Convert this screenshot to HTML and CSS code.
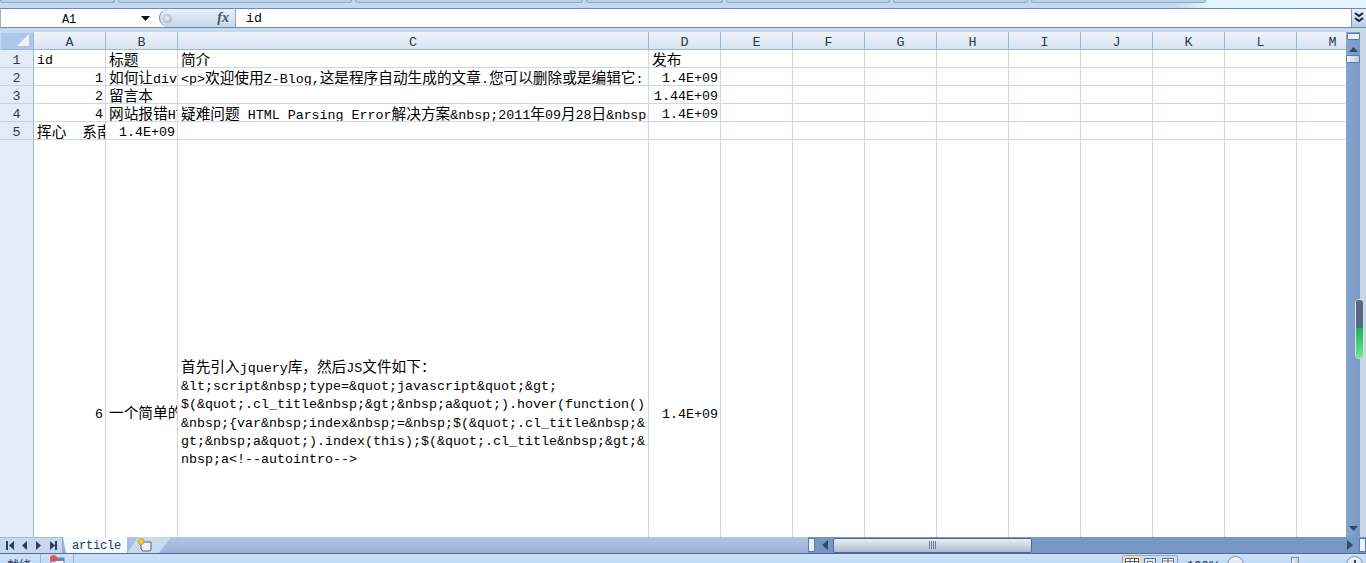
FILE: index.html
```html
<!DOCTYPE html>
<html lang="zh">
<head>
<meta charset="utf-8">
<title>article</title>
<link rel="stylesheet" href="styles.css">
</head>
<body>
<div class="ribbon">
  <div class="pill w1"></div><div class="pill w2"></div><div class="pill w3"></div><div class="pill w4"></div><div class="pill w5"></div><div class="pill w6"></div><div class="pill w7"></div>
</div>
<div class="formula">
  <div class="namebox"><span class="nameval">A1</span><svg class="drop" width="9" height="5" viewBox="0 0 9 5"><path d="M0 0h9L4.500 5z" fill="#111"/></svg></div>
  <div class="fxbtn"><span class="knob"></span><span class="fx">fx</span></div>
  <div class="input">id</div>
  <div class="expand"><svg width="10" height="12" viewBox="0 0 10 12"><path d="M1 1l4 3 4-3M1 6l4 3 4-3" fill="none" stroke="#14233a" stroke-width="2"/></svg></div>
</div>
<div class="gap"></div>
<div class="main">
  <div class="sheet">
    <div class="grid">
      <div class="corner"><svg width="12" height="12" viewBox="0 0 12 12"><path d="M12 0v12H0z" fill="#eef3fa"/></svg></div>
      <div class="ch">A</div><div class="ch">B</div><div class="ch">C</div><div class="ch">D</div><div class="ch">E</div><div class="ch">F</div><div class="ch">G</div><div class="ch">H</div><div class="ch">I</div><div class="ch">J</div><div class="ch">K</div><div class="ch">L</div><div class="ch">M</div>

      <div class="rh">1</div>
      <div class="c">id</div><div class="c"><span class="z">标题</span></div><div class="c"><span class="z">简介</span></div><div class="c"><span class="z">发布</span></div><div class="c"></div><div class="c"></div><div class="c"></div><div class="c"></div><div class="c"></div><div class="c"></div><div class="c"></div><div class="c"></div><div class="c"></div>

      <div class="rh">2</div>
      <div class="c r">1</div><div class="c"><span class="z">如何让</span>div</div><div class="c">&lt;p&gt;<span class="z">欢迎使用</span>Z-Blog,<span class="z">这是程序自动生成的文章</span>.<span class="z">您可以删除或是编辑它</span>:</div><div class="c r">1.4E+09</div><div class="c"></div><div class="c"></div><div class="c"></div><div class="c"></div><div class="c"></div><div class="c"></div><div class="c"></div><div class="c"></div><div class="c"></div>

      <div class="rh">3</div>
      <div class="c r">2</div><div class="c"><span class="z">留言本</span></div><div class="c"></div><div class="c r">1.44E+09</div><div class="c"></div><div class="c"></div><div class="c"></div><div class="c"></div><div class="c"></div><div class="c"></div><div class="c"></div><div class="c"></div><div class="c"></div>

      <div class="rh">4</div>
      <div class="c r">4</div><div class="c"><span class="z">网站报错</span>HTML</div><div class="c"><span class="z">疑难问题</span> HTML Parsing Error<span class="z">解决方案</span>&amp;nbsp;2011<span class="z">年</span>09<span class="z">月</span>28<span class="z">日</span>&amp;nbsp;</div><div class="c r">1.4E+09</div><div class="c"></div><div class="c"></div><div class="c"></div><div class="c"></div><div class="c"></div><div class="c"></div><div class="c"></div><div class="c"></div><div class="c"></div>

      <div class="rh">5</div>
      <div class="c"><span class="z">挥心</span>  <span class="z">系南</span></div><div class="c r">1.4E+09</div><div class="c"></div><div class="c"></div><div class="c"></div><div class="c"></div><div class="c"></div><div class="c"></div><div class="c"></div><div class="c"></div><div class="c"></div><div class="c"></div><div class="c"></div>

      <div class="rh"></div>
      <div class="c r tall">6</div><div class="c tall"><span class="z">一个简单的</span></div>
      <div class="c wrap"><span class="z">首先引入</span>jquery<span class="z">库，然后</span>JS<span class="z">文件如下：</span><br>&amp;lt;script&amp;nbsp;type=&amp;quot;javascript&amp;quot;&amp;gt;<br>$(&amp;quot;.cl_title&amp;nbsp;&amp;gt;&amp;nbsp;a&amp;quot;).hover(function()<br>&amp;nbsp;{var&amp;nbsp;index&amp;nbsp;=&amp;nbsp;$(&amp;quot;.cl_title&amp;nbsp;&amp;<br>gt;&amp;nbsp;a&amp;quot;).index(this);$(&amp;quot;.cl_title&amp;nbsp;&amp;gt;&amp;<br>nbsp;a&lt;!--autointro--&gt;</div>
      <div class="c r tall">1.4E+09</div><div class="c"></div><div class="c"></div><div class="c"></div><div class="c"></div><div class="c"></div><div class="c"></div><div class="c"></div><div class="c"></div><div class="c"></div>
    </div>
  </div>
  <div class="vbar">
    <div class="vtrack">
      <div class="split-v"></div>
      <svg class="varrow" width="9" height="5" viewBox="0 0 9 5"><path d="M0 5h9L4.500 0z" fill="#2f4a70"/></svg>
      <div class="vthumb"></div>
      <svg class="varrow down" width="9" height="5" viewBox="0 0 9 5"><path d="M0 0h9L4.500 5z" fill="#2f4a70"/></svg>
    </div>
    <div class="vedge"></div>
  </div>
  <div class="meter"><div class="meter-top"></div><div class="meter-low"></div></div>
</div>
<div class="tabbar">
  <div class="tabnav">
    <svg width="62" height="16" viewBox="0 0 62 16"><g fill="#243f66"><path d="M6 3h2v9H6zM14 3v9L9 7.500z"/><path d="M27 3v9l-5-4.500z"/><path d="M36 3v9l5-4.500z"/><path d="M50 3v9l5-4.500zM55 3h2v9h-2z"/></g></svg>
  </div>
  <div class="tab">article</div>
  <div class="newtab"><svg width="16" height="14" viewBox="0 0 16 14"><path d="M4 4h10v8l-2 1H6l-2-2z" fill="#eef3fa" stroke="#4d6486"/><circle cx="4" cy="3.500" r="3" fill="#f2c84b" stroke="#b58a20" stroke-width=".6"/></svg></div>
  <div class="tabfill"></div>
  <div class="hbar">
    <div class="split-h"></div>
    <svg class="harrow" width="6" height="10" viewBox="0 0 6 10"><path d="M6 0v10L0 5z" fill="#2f4a70"/></svg>
    <div class="hthumb"><svg width="8" height="8" viewBox="0 0 8 8"><path d="M.5 0v8M2.500 0v8M4.500 0v8M6.500 0v8" stroke="#6d7f9b"/></svg></div>
    <div class="hspace"></div>
    <svg class="harrow" width="6" height="10" viewBox="0 0 6 10"><path d="M0 0v10l6-5z" fill="#2f4a70"/></svg>
    <div class="split-h"></div>
  </div>
</div>
<div class="status">
  <div class="st-ready">就绪</div>
  <div class="st-macro"><svg width="16" height="14" viewBox="0 0 16 14"><rect x="2" y="3" width="13" height="11" fill="#f4f6fb" stroke="#6a7f9f"/><rect x="2" y="3" width="13" height="3" fill="#5f86c4"/><circle cx="4.500" cy="3.500" r="3.500" fill="#e0584a"/></svg></div>
  <div class="st-fill"></div>
  <div class="views">
    <div class="vbtn on"><svg width="14" height="10" viewBox="0 0 14 10"><path d="M.5.500h13v9H.5zM.5 3.500h13M.5 6.500h13M5 .5v9M9.500.5v9" fill="#fff" stroke="#4f5f78"/></svg></div>
    <div class="vbtn"><svg width="12" height="11" viewBox="0 0 12 11"><path d="M.5.500h11v10H.5z" fill="#dfe7f2" stroke="#5c6d86"/><path d="M3.500 3.500h5v4h-5z" fill="#fff" stroke="#5c6d86"/></svg></div>
    <div class="vbtn"><svg width="12" height="11" viewBox="0 0 12 11"><path d="M.5.500h11v10H.5zM6 .5v10M.5 3h11" fill="#fff" stroke="#5c6d86"/></svg></div>
  </div>
  <div class="zoom">100%</div>
  <div class="zbtn"><span class="minus"></span></div>
  <div class="slider"><span class="sthumb"></span></div>
  <div class="zbtn plus"><span class="minus"></span><span class="plusv"></span></div>
</div>
</body>
</html>
```
FILE: styles.css
```css
* { box-sizing: border-box; }
html, body { margin: 0; height: 563px; overflow: hidden; }
body {
  display: flex;
  flex-direction: column;
  background: #fff;
  font-family: "Liberation Mono", "Noto Sans CJK SC", monospace;
  font-size: 13.333px;
  color: #000;
}

/* ribbon remnant */
.ribbon {
  flex: 0 0 8px;
  display: flex;
  gap: 3px;
  align-items: flex-start;
  background: linear-gradient(90deg, #c3d8f1 0, #c3d8f1 86%, #e2f4ff 88.500%, #e4f5ff 100%);
}
.pill {
  height: 3px;
  background: #bad0ea;
  border: 1px solid #8fa9c9;
  border-top: 0;
  border-radius: 0 0 3px 3px;
}
.w1 { width: 115px; } .w2 { width: 234px; } .w3 { width: 228px; } .w4 { width: 137px; }
.w5 { width: 164px; } .w6 { width: 135px; } .w7 { width: 175px; }

/* formula bar */
.formula {
  flex: 0 0 20px;
  display: flex;
  overflow: hidden;
  background: #fff;
  border-top: 1px solid #6e8aa6;
  border-bottom: 1px solid #6e8aa6;
  border-left: 1px solid #9db3cc;
}
.namebox {
  flex: 0 0 158px;
  display: flex;
  align-items: center;
}
.nameval { margin-left: 61px; padding-top: 3px; font-size: 12px; letter-spacing: -.2px; }
.drop { margin-left: 65px; }
.fxbtn {
  flex: 0 0 77px;
  display: flex;
  align-items: center;
  justify-content: space-between;
  padding: 0 6px 0 3px;
  background: linear-gradient(#e9f1fb, #c5d6ec);
  border-radius: 10px 0 0 10px;
  border-left: 1px solid #6e8aa6;
  border-right: 1px solid #8ea5c0;
}
.knob {
  width: 9px;
  height: 9px;
  border-radius: 50%;
  background: radial-gradient(circle at 45% 45%, #f2f4f7, #8b9bb0);
}
.fx {
  font-family: "Liberation Serif", serif;
  font-style: italic;
  font-weight: 700;
  font-size: 14px;
  color: #44556b;
}
.input { flex: 1; padding-left: 10px; line-height: 20px; }
.expand {
  flex: 0 0 15px;
  display: flex;
  align-items: center;
  justify-content: center;
  background: linear-gradient(#e9f0f9, #b9cce6);
  border-left: 1px solid #7f97b5;
}
.gap { flex: 0 0 4px; background: #c9d9ec; }

/* sheet */
.main { flex: 0 0 505px; display: flex; position: relative; overflow: hidden; }
.sheet { flex: 0 0 1346px; overflow: hidden; }
.grid {
  display: grid;
  grid-template-columns: 34px 72px 72px 471px repeat(10, 72px);
  grid-template-rows: repeat(6, 18px) 548px;
}
.corner {
  display: flex;
  align-items: flex-end;
  justify-content: flex-end;
  padding: 0 4px 3px 0;
  background: #aec6e7;
  border: 1px solid #c9d8ec;
  border-right: 1px solid #9eb6ce;
  border-bottom: 1px solid #9eb6ce;
}
.ch {
  text-align: center;
  line-height: 22px;
  overflow: hidden;
  color: #29394f;
  background: linear-gradient(#f0f4fa, #d9e3f0);
  border-right: 1px solid #9eb6ce;
  border-bottom: 1px solid #9eb6ce;
}
.rh {
  text-align: center;
  line-height: 21px;
  overflow: hidden;
  color: #29394f;
  background: #e3ebf6;
  border-right: 1px solid #9eb6ce;
  border-bottom: 1px solid #c5d2e3;
}
.c {
  padding: 0 2px 0 3px;
  line-height: 21px;
  white-space: pre;
  overflow: hidden;
  border-right: 1px solid #d0d7e5;
  border-bottom: 1px solid #d0d7e5;
}
.r { text-align: right; }
.c.tall { line-height: 550px; }
.z {
  font-family: "Noto Sans CJK SC", sans-serif;
  font-size: 14.667px;
  line-height: 17px;
}
.c.wrap { padding-top: 217px; line-height: 18.200px; }

/* vertical bar */
.vbar { flex: 1; display: flex; }
.vtrack {
  flex: 0 0 14px;
  position: relative;
  display: flex;
  flex-direction: column;
  align-items: center;
  background: linear-gradient(90deg, #86a3cd, #7999c6);
}
.vedge { flex: 1; background: #c8d6e8; }
.split-v {
  margin-top: 1px;
  width: 13px;
  height: 7px;
  background: #e9f0f9;
  border: 1px solid #5f7ca6;
  border-radius: 1px;
}
.varrow { margin-top: 7px; }
.vthumb {
  margin-top: 3px;
  width: 14px;
  height: 8px;
  background: linear-gradient(90deg, #f2f5f9, #bcc9da);
  border: 1px solid #5f7ca6;
  border-radius: 1px;
}
.down { position: absolute; bottom: 6px; margin: 0; }
.meter {
  position: absolute;
  left: 1355px;
  top: 267px;
  width: 9px;
  height: 60px;
  border: 1px solid #d6deea;
  border-radius: 4px;
  overflow: hidden;
  display: flex;
  flex-direction: column;
}
.meter-top { flex: 0 0 28px; background: #566a86; }
.meter-low { flex: 1; background: linear-gradient(#17b552, #6fe88f); }

/* tab bar */
.tabbar {
  flex: 0 0 17px;
  display: flex;
  background: linear-gradient(#b3c7e3, #9ab1d5);
  border-bottom: 1px solid #4f6b8f;
  overflow: hidden;
}
.tabnav {
  flex: 0 0 63px;
  background: #c7d7ed;
  border-top: 1px solid #a5bad7;
  border-right: 1px solid #8ea5c6;
  display: flex;
}
.tab {
  flex: 0 0 64px;
  padding-left: 9px;
  font-size: 12px;
  letter-spacing: -.2px;
  line-height: 18px;
  background: #f6f9fd;
  color: #233a5c;
  clip-path: polygon(0 0, 100% 0, 100% 100%, 3px 100%);
}
.newtab {
  flex: 0 0 44px;
  display: flex;
  align-items: center;
  padding-left: 10px;
  background: #c9d9ee;
  clip-path: polygon(11px 0, 100% 0, 32px 100%, 0 100%);
}
.tabfill { flex: 0 0 637px; }
.hbar {
  flex: 1;
  display: flex;
  align-items: center;
  background: #7897c4;
  height: 16px;
}
.split-h {
  flex: 0 0 7px;
  height: 14px;
  background: #edf2f9;
  border: 1px solid #5f7ca6;
}
.harrow { margin: 0 6px 0 7px; }
.hthumb {
  flex: 0 0 199px;
  height: 15px;
  margin-left: -1px;
  display: flex;
  align-items: center;
  justify-content: center;
  background: linear-gradient(#e9eef5, #afbccf);
  border: 1px solid #4f6b8f;
  border-radius: 2px;
}
.hspace { flex: 1; }

/* status bar */
.status {
  flex: 0 0 24px;
  display: flex;
  align-items: flex-start;
  background: linear-gradient(#cbe0fa, #b8d3f4);
  color: #1d3557;
}
.st-ready {
  flex: 0 0 41px;
  padding: 3px 0 0 7px;
  font-family: "Noto Sans CJK SC", sans-serif;
  font-size: 12px;
  line-height: 16px;
  border-right: 1px solid #9ab4d6;
  height: 24px;
}
.st-macro {
  flex: 0 0 33px;
  padding: 1px 0 0 8px;
  border-right: 1px solid #9ab4d6;
  height: 24px;
}
.st-fill { flex: 0 0 1048px; }
.views {
  flex: 0 0 56px;
  display: flex;
  margin-top: 1px;
  border: 1px solid #8ca5c8;
  border-radius: 2px;
  height: 20px;
}
.vbtn { flex: 1; display: flex; justify-content: center; padding-top: 2px; }
.vbtn.on { background: linear-gradient(#fbdcae, #f6bf78); }
.zoom {
  flex: 0 0 49px;
  padding: 4px 0 0 9px;
  font-family: "Liberation Sans", sans-serif;
  font-size: 13px;
  line-height: 15px;
  color: #1f3656;
}
.zbtn {
  flex: 0 0 17px;
  height: 17px;
  margin-top: 2px;
  position: relative;
  border: 1px solid #7c8fa9;
  border-radius: 50%;
  background: linear-gradient(#f4f7fb, #c4d2e5);
}
.minus { position: absolute; left: 3px; top: 6px; width: 9px; height: 2px; background: #33475f; }
.plusv { position: absolute; left: 6.500px; top: 3px; width: 2px; height: 9px; background: #33475f; }
.slider { flex: 0 0 102px; position: relative; }
.sthumb {
  position: absolute;
  left: 47px;
  top: 3px;
  width: 8px;
  height: 18px;
  background: linear-gradient(90deg, #eef3f9, #bccbe0);
  border: 1px solid #7c8fa9;
}
```
